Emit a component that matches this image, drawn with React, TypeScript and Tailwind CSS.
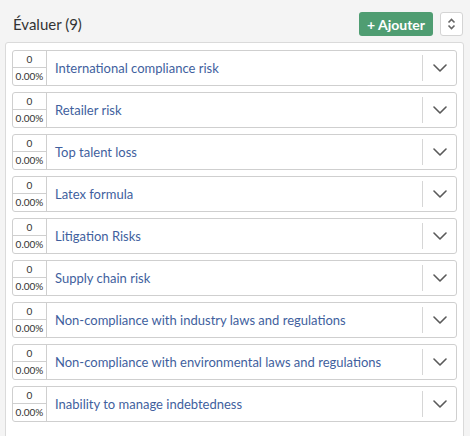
const risks = [
  "International compliance risk",
  "Retailer risk",
  "Top talent loss",
  "Latex formula",
  "Litigation Risks",
  "Supply chain risk",
  "Non-compliance with industry laws and regulations",
  "Non-compliance with environmental laws and regulations",
  "Inability to manage indebtedness",
];

function RiskRow({label}: {label: string}) {
  return (
    <div className="flex h-[36px] items-stretch rounded-[3px] border border-[#cfcfcf] bg-white">
      <div className="flex w-[34px] shrink-0 flex-col border-r border-[#cfcfcf] text-[10px] text-[#333]">
        <div className="flex h-[17px] items-center justify-center border-b border-[#cfcfcf]">0</div>
        <div className="flex flex-1 items-center justify-center">0.00%</div>
      </div>
      <div className="flex flex-1 items-center pl-[8px] pt-[2px] text-[13px] text-[#3f5f9e]">{label}</div>
      <div className="my-[4px] w-px bg-[#d6d6d6]" />
      <div className="flex w-[33px] items-center justify-center pb-[1px]">
        <svg width="14" height="8" viewBox="0 0 14 8" fill="none" stroke="#5a5a5a" strokeWidth="1.6" strokeLinecap="round" strokeLinejoin="round">
          <path d="M1 1 L7 7 L13 1" />
        </svg>
      </div>
    </div>
  );
}

export default function App() {
  return (
    <div className="h-[436px] w-[470px] overflow-hidden bg-[#f4f4f4] font-['Lato',sans-serif]">
      <div className="flex h-[24px] items-center justify-between pl-[13px] pr-[7px] mt-[12px]">
        <span className="text-[15px] text-[#333]">Évaluer (9)</span>
        <div className="flex items-center gap-[7px]">
          <button className="h-[24px] rounded-[3px] bg-[#4f9d72] px-[8px] text-[14px] font-bold text-white">
            + Ajouter
          </button>
          <button className="flex h-[24px] w-[23px] items-center justify-center rounded-[3px] border border-[#d4d4d4] bg-white">
            <svg width="9" height="12" viewBox="0 0 9 12" fill="none" stroke="#666" strokeWidth="1.6">
              <path d="M1.5 4.5 L4.5 1.5 L7.5 4.5" />
              <path d="M1.5 7.5 L4.5 10.5 L7.5 7.5" />
            </svg>
          </button>
        </div>
      </div>
      <div className="mx-[5px] mr-[6px] mt-[6px] h-[420px] rounded-[3px] border border-[#dadada] bg-white px-[6px] pt-[7px]">
        <div className="flex flex-col gap-[6px]">
          {risks.map((r) => (
            <RiskRow key={r} label={r} />
          ))}
        </div>
      </div>
    </div>
  );
}
